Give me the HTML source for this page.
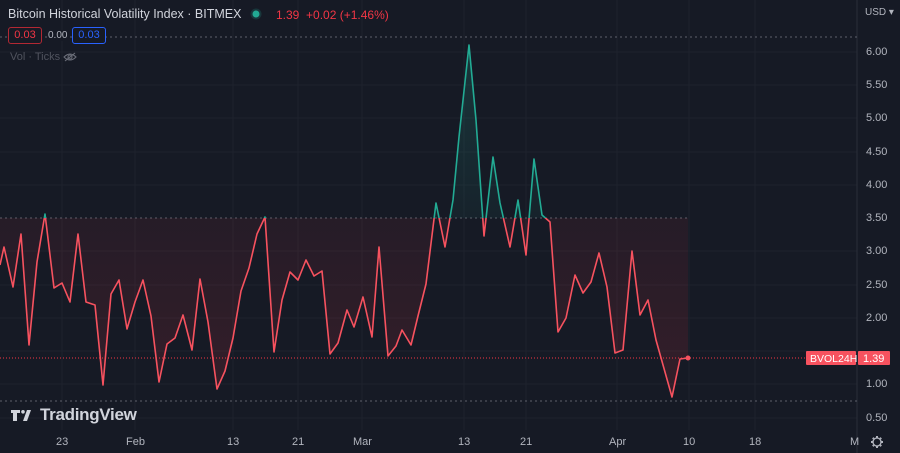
<!DOCTYPE html>
<html><head><meta charset="utf-8"><style>
body{margin:0;width:900px;height:453px;background:#161a25;overflow:hidden;font-family:"Liberation Sans",sans-serif;position:relative}
.t{position:absolute;font-size:11px;color:#b2b5be;white-space:nowrap}
.p{position:absolute;left:866px;font-size:11px;color:#b2b5be}
</style></head><body>
<svg width="900" height="453" style="position:absolute;left:0;top:0">
<defs>
<clipPath id="below"><rect x="0" y="218" width="700" height="300"/></clipPath>
<clipPath id="above"><rect x="0" y="0" width="700" height="218"/></clipPath>
<linearGradient id="rg" x1="0" y1="218" x2="0" y2="400" gradientUnits="userSpaceOnUse"><stop offset="0" stop-color="#f23645" stop-opacity="0.07"/><stop offset="1" stop-color="#f23645" stop-opacity="0.14"/></linearGradient>
<linearGradient id="gg" x1="0" y1="40" x2="0" y2="218" gradientUnits="userSpaceOnUse"><stop offset="0" stop-color="#22ab94" stop-opacity="0.2"/><stop offset="1" stop-color="#22ab94" stop-opacity="0.06"/></linearGradient>
</defs>
<g stroke="#1e222d" stroke-width="1">
<line x1="0" y1="52" x2="857" y2="52"/><line x1="0" y1="85" x2="857" y2="85"/><line x1="0" y1="118" x2="857" y2="118"/><line x1="0" y1="152" x2="857" y2="152"/><line x1="0" y1="185" x2="857" y2="185"/><line x1="0" y1="251" x2="857" y2="251"/><line x1="0" y1="285" x2="857" y2="285"/><line x1="0" y1="318" x2="857" y2="318"/><line x1="0" y1="351" x2="857" y2="351"/><line x1="0" y1="384" x2="857" y2="384"/><line x1="0" y1="418" x2="857" y2="418"/>
<line x1="62" y1="0" x2="62" y2="430"/><line x1="135" y1="0" x2="135" y2="430"/><line x1="233" y1="0" x2="233" y2="430"/><line x1="298" y1="0" x2="298" y2="430"/><line x1="362" y1="0" x2="362" y2="430"/><line x1="464" y1="0" x2="464" y2="430"/><line x1="526" y1="0" x2="526" y2="430"/><line x1="617" y1="0" x2="617" y2="430"/><line x1="689" y1="0" x2="689" y2="430"/><line x1="755" y1="0" x2="755" y2="430"/>
</g>
<line x1="857" y1="0" x2="857" y2="453" stroke="#2a2e39"/>
<line x1="0" y1="37" x2="857" y2="37" stroke="#5d606b" stroke-dasharray="2 3"/>
<line x1="0" y1="401" x2="857" y2="401" stroke="#5d606b" stroke-dasharray="2 3"/>
<line x1="0" y1="218" x2="688" y2="218" stroke="#5d606b" stroke-dasharray="2 3"/>
<line x1="0" y1="358" x2="857" y2="358" stroke="#f23645" stroke-dasharray="1 2"/>
<polygon clip-path="url(#below)" fill="url(#rg)" points="0,218 0,265 4,247 13,287 21,234 29,345 37,262 45,214 54,288 62,283 70,302 78,234 86,302 95,305 103,385 111,294 119,280 127,329 135,302 143,280 151,316 159,382 167,344 175,338 183,315 192,350 200,279 208,322 217,389 225,371 233,338 241,291 249,268 257,234 265,217 274,352 282,300 290,272 298,280 306,260 314,276 322,271 330,354 338,343 347,310 354,327 363,297 372,337 379,247 388,356 396,346 402,330 411,345 418,316 426,284 436,203 445,247 453,200 459,137 469,45 476,120 484,236 493,157 500,203 510,247 518,200 526,255 534,159 542,215 550,222 558,332 566,318 575,275 583,293 591,282 599,253 607,287 615,353 623,350 632,251 640,315 648,300 656,340 672,397 680,359 688,358 688,218"/>
<polygon clip-path="url(#above)" fill="url(#gg)" points="0,218 0,265 4,247 13,287 21,234 29,345 37,262 45,214 54,288 62,283 70,302 78,234 86,302 95,305 103,385 111,294 119,280 127,329 135,302 143,280 151,316 159,382 167,344 175,338 183,315 192,350 200,279 208,322 217,389 225,371 233,338 241,291 249,268 257,234 265,217 274,352 282,300 290,272 298,280 306,260 314,276 322,271 330,354 338,343 347,310 354,327 363,297 372,337 379,247 388,356 396,346 402,330 411,345 418,316 426,284 436,203 445,247 453,200 459,137 469,45 476,120 484,236 493,157 500,203 510,247 518,200 526,255 534,159 542,215 550,222 558,332 566,318 575,275 583,293 591,282 599,253 607,287 615,353 623,350 632,251 640,315 648,300 656,340 672,397 680,359 688,358 688,218"/>
<g fill="none" stroke-width="1.6" stroke-linejoin="round">
<polyline clip-path="url(#below)" stroke="#f7525f" points="0,265 4,247 13,287 21,234 29,345 37,262 45,214 54,288 62,283 70,302 78,234 86,302 95,305 103,385 111,294 119,280 127,329 135,302 143,280 151,316 159,382 167,344 175,338 183,315 192,350 200,279 208,322 217,389 225,371 233,338 241,291 249,268 257,234 265,217 274,352 282,300 290,272 298,280 306,260 314,276 322,271 330,354 338,343 347,310 354,327 363,297 372,337 379,247 388,356 396,346 402,330 411,345 418,316 426,284 436,203 445,247 453,200 459,137 469,45 476,120 484,236 493,157 500,203 510,247 518,200 526,255 534,159 542,215 550,222 558,332 566,318 575,275 583,293 591,282 599,253 607,287 615,353 623,350 632,251 640,315 648,300 656,340 672,397 680,359 688,358"/>
<polyline clip-path="url(#above)" stroke="#22ab94" points="0,265 4,247 13,287 21,234 29,345 37,262 45,214 54,288 62,283 70,302 78,234 86,302 95,305 103,385 111,294 119,280 127,329 135,302 143,280 151,316 159,382 167,344 175,338 183,315 192,350 200,279 208,322 217,389 225,371 233,338 241,291 249,268 257,234 265,217 274,352 282,300 290,272 298,280 306,260 314,276 322,271 330,354 338,343 347,310 354,327 363,297 372,337 379,247 388,356 396,346 402,330 411,345 418,316 426,284 436,203 445,247 453,200 459,137 469,45 476,120 484,236 493,157 500,203 510,247 518,200 526,255 534,159 542,215 550,222 558,332 566,318 575,275 583,293 591,282 599,253 607,287 615,353 623,350 632,251 640,315 648,300 656,340 672,397 680,359 688,358"/>
</g>
<circle cx="688" cy="358" r="2.5" fill="#f7525f"/>
<rect x="806" y="351" width="50" height="14" rx="1" fill="#f7525f"/>
<rect x="858" y="351" width="32" height="14" rx="1" fill="#f7525f"/>
<text x="810" y="362" font-size="10.5" fill="#fff" font-family="Liberation Sans">BVOL24H</text>
<text x="863" y="362" font-size="11" fill="#fff" font-family="Liberation Sans">1.39</text>
<g transform="translate(877,442)" stroke="#b2b5be" fill="none" stroke-width="1.3"><circle r="4"/><g stroke-width="2"><line x1="0" y1="-6" x2="0" y2="-4.5"/><line x1="0" y1="6" x2="0" y2="4.5"/><line x1="-6" y1="0" x2="-4.5" y2="0"/><line x1="6" y1="0" x2="4.5" y2="0"/><line x1="-4.2" y1="-4.2" x2="-3.2" y2="-3.2"/><line x1="4.2" y1="4.2" x2="3.2" y2="3.2"/><line x1="4.2" y1="-4.2" x2="3.2" y2="-3.2"/><line x1="-4.2" y1="4.2" x2="-3.2" y2="3.2"/></g></g>
<g fill="#d1d4dc"><path d="M11 410h9v3h-3v8h-4v-8h-2z"/><circle cx="23" cy="411.8" r="1.8"/><path d="M27 410h4l-4 11h-4z"/></g>
<g transform="translate(70,57)" stroke="#6a6d78" fill="none" stroke-width="1.1"><path d="M-6 0Q0-6 6 0Q0 6-6 0Z"/><circle r="2"/><line x1="-5" y1="4" x2="5" y2="-4"/></g>
<circle cx="256" cy="14" r="3.5" fill="#22ab94"/><circle cx="256" cy="14" r="5.5" fill="#22ab94" opacity="0.2"/>
</svg>
<div class="t" style="left:8px;top:7px;font-size:12.5px;color:#d1d4dc">Bitcoin Historical Volatility Index · BITMEX</div>
<div class="t" style="left:276px;top:8px;font-size:12px;color:#f23645">1.39 &nbsp;+0.02 (+1.46%)</div>
<div class="t" style="left:8px;top:27px;width:32px;height:15px;border:1px solid #b22833;border-radius:3px;color:#f23645;text-align:center;line-height:15px;font-size:11px;background:#161a25">0.03</div>
<div class="t" style="left:48px;top:30px;font-size:10px;background:#161a25">0.00</div>
<div class="t" style="left:72px;top:27px;width:32px;height:15px;border:1px solid #2962ff;border-radius:3px;color:#2962ff;text-align:center;line-height:15px;font-size:11px;background:#161a25">0.03</div>
<div class="t" style="left:10px;top:51px;color:#50535e">Vol · Ticks</div>
<div class="t" style="left:40px;top:405px;font-size:17px;font-weight:bold;color:#d1d4dc;letter-spacing:-0.3px">TradingView</div>
<div class="t" style="left:865px;top:7px;font-size:10px">USD ▾</div>
<div class="p" style="top:46px">6.00</div><div class="p" style="top:79px">5.50</div><div class="p" style="top:112px">5.00</div><div class="p" style="top:146px">4.50</div><div class="p" style="top:179px">4.00</div><div class="p" style="top:212px">3.50</div><div class="p" style="top:245px">3.00</div><div class="p" style="top:279px">2.50</div><div class="p" style="top:312px">2.00</div><div class="p" style="top:378px">1.00</div><div class="p" style="top:412px">0.50</div>
<div class="t" style="left:56px;top:436px">23</div><div class="t" style="left:126px;top:436px">Feb</div><div class="t" style="left:227px;top:436px">13</div><div class="t" style="left:292px;top:436px">21</div><div class="t" style="left:353px;top:436px">Mar</div><div class="t" style="left:458px;top:436px">13</div><div class="t" style="left:520px;top:436px">21</div><div class="t" style="left:609px;top:436px">Apr</div><div class="t" style="left:683px;top:436px">10</div><div class="t" style="left:749px;top:436px">18</div><div class="t" style="left:850px;top:436px">M</div>
</body></html>
